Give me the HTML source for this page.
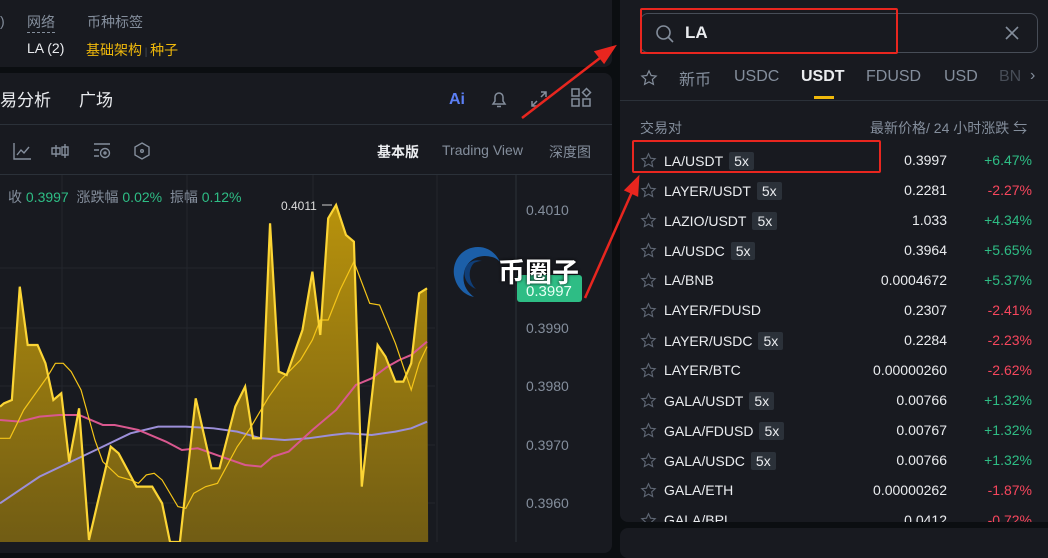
<!DOCTYPE html>
<html><head><meta charset="utf-8"><style>
*{margin:0;padding:0;box-sizing:border-box}
body{width:1048px;height:542px;background:#0b0e11;overflow:hidden;position:relative;font-family:"Liberation Sans","Noto Sans CJK SC",sans-serif;color:#eaecef}
.p{position:absolute;background:#181a20;border-radius:8px}
.t{position:absolute;white-space:nowrap}
.g{color:#848e9c}
.row{position:absolute;left:0;width:428px;height:30px;font-size:14px}
.row .s{position:absolute;left:20px;top:6px}
.row .n{position:absolute;left:44px;top:6px;color:#eaecef}
.row .b{display:inline-block;background:#2b3139;color:#eaecef;padding:1px 5px;margin-left:6px;border-radius:2px}
.row .pr{position:absolute;right:101px;top:6px}
.row .c{position:absolute;right:16px;top:6px}
.up{color:#2ebd85}.dn{color:#f6465d}
</style></head><body>
<div class="p" style="left:-10px;top:0;width:622px;height:67px;border-radius:0 0 8px 8px"></div>
<div class="t g" style="left:0;top:13px;font-size:14px">)</div>
<div class="t g" style="left:27px;top:12px;font-size:14px;border-bottom:1px dashed #848e9c;line-height:20px">网络</div>
<div class="t g" style="left:87px;top:12px;font-size:14px">币种标签</div>
<div class="t" style="left:27px;top:40px;font-size:14px">LA (2)</div>
<div class="t" style="left:86px;top:40px;font-size:14px;color:#f0b90b">基础架构<span style="color:#474d57;font-size:10px"> | </span>种子</div>

<div class="p" style="left:-10px;top:73px;width:622px;height:480px"></div>
<div class="t" style="left:0;top:86px;font-size:17px;color:#eaecef">易分析</div>
<div class="t" style="left:79px;top:86px;font-size:17px;color:#eaecef">广场</div>
<div class="t" style="left:449px;top:91px;font-size:16px;font-weight:bold;color:#5b7ff5">Ai</div>
<svg class="t" style="left:488px;top:88px" width="22" height="22" viewBox="0 0 22 22" fill="none" stroke="#848e9c" stroke-width="1.5"><path d="M5 16h12l-2-3V9a4 4 0 0 0-8 0v4z M9 18.5h4"/></svg>
<svg class="t" style="left:528px;top:88px" width="22" height="22" viewBox="0 0 22 22" fill="none" stroke="#848e9c" stroke-width="1.5"><path d="M13 4h5v5M18 4l-5 5M9 18H4v-5M4 18l5-5"/></svg>
<svg class="t" style="left:570px;top:87px" width="22" height="22" viewBox="0 0 22 22" fill="none" stroke="#848e9c" stroke-width="1.5"><rect x="2" y="12" width="7" height="7"/><rect x="13" y="12" width="7" height="7"/><rect x="2" y="2" width="7" height="7"/><path d="M16.5 1.5l4 4-4 4-4-4z"/></svg>
<div style="position:absolute;left:0;top:124px;width:612px;height:1px;background:#2b3139"></div>
<svg class="t" style="left:12px;top:140px" width="150" height="22" viewBox="0 0 150 22" fill="none" stroke="#848e9c" stroke-width="1.4"><path d="M2 3v16h17M5 15l4-5 3 3 5-6"/><path d="M44 5v12M40 8h8v6h-8zM53 4v14M50 7h6v8h-6z"/><path d="M82 4h16M82 10h5M82 16h5"/><circle cx="93" cy="13" r="4.5"/><circle cx="93" cy="13" r="1"/><path d="M130 3l7 4v8l-7 4-7-4V7z"/><circle cx="130" cy="11" r="1.3"/></svg>
<div class="t" style="left:377px;top:142px;font-size:14px;font-weight:bold">基本版</div>
<div class="t g" style="left:442px;top:142px;font-size:14px">Trading View</div>
<div class="t g" style="left:549px;top:142px;font-size:14px">深度图</div>
<div style="position:absolute;left:0;top:174px;width:612px;height:1px;background:#2b3139"></div>

<svg class="t" style="left:0;top:175px" width="612" height="367" viewBox="0 175 612 367">
<defs><linearGradient id="f" x1="0" y1="0" x2="0" y2="1"><stop offset="0" stop-color="#b8920c"/><stop offset="1" stop-color="#6e5a14"/></linearGradient><clipPath id="c"><rect x="0" y="175" width="435" height="367"/></clipPath></defs>
<g stroke="#23262d" stroke-width="1"><path d="M62 175V542M187 175V542M313 175V542M437 175V542M0 268H435M0 328H435M0 386H435M0 445H435M0 503H435"/></g>
<path d="M516 175V542" stroke="#2b3139"/>
<g clip-path="url(#c)"><g transform="translate(0,190) scale(0.3954,0.3333)">
<polygon fill="url(#f)" points="0,650 10,640 30,630 50,290 70,465 95,465 115,520 135,630 155,610 175,815 200,655 225,1050 280,770 300,790 345,890 385,890 410,940 430,1056 455,1056 495,625 535,835 555,835 595,650 620,590 640,745 660,745 683,100 705,545 725,555 765,420 790,245 810,435 830,85 850,45 875,135 895,155 915,890 955,465 975,500 1000,575 1020,575 1040,520 1060,310 1080,295 1083,1100 0,1100"/>
<polyline fill="none" stroke="#9c8fd9" stroke-width="2" vector-effect="non-scaling-stroke" points="0,940 50,900 100,860 180,815 260,770 330,730 400,710 470,710 540,715 600,725 660,745 720,750 780,745 840,735 880,730 940,735 1000,725 1040,715 1080,695"/>
<polyline fill="none" stroke="#d9588f" stroke-width="2" vector-effect="non-scaling-stroke" points="0,690 50,695 100,680 150,675 200,675 260,705 290,705 350,720 420,755 460,780 500,775 560,800 620,825 660,830 690,800 730,785 790,720 850,660 900,585 940,565 980,530 1010,510 1040,495 1080,455"/>
<polyline fill="none" stroke="#f5c518" stroke-width="1.2" vector-effect="non-scaling-stroke" points="0,745 25,745 60,660 120,560 140,520 160,520 180,545 205,600 240,750 260,815 300,860 330,870 350,880 370,855 390,850 410,870 450,950 470,955 490,910 520,890 550,880 600,770 630,720 680,620 710,570 760,510 790,450 810,390 830,390 860,300 895,215 935,340 960,345 1000,460 1040,600 1060,520 1080,470"/>
<polyline fill="none" stroke="#fcd535" stroke-width="2.2" vector-effect="non-scaling-stroke" points="0,650 10,640 30,630 50,290 70,465 95,465 115,520 135,630 155,610 175,815 200,655 225,1050 280,770 300,790 345,890 385,890 410,940 430,1056 455,1056 495,625 535,835 555,835 595,650 620,590 640,745 660,745 683,100 705,545 725,555 765,420 790,245 810,435 830,85 850,45 875,135 895,155 915,890 955,465 975,500 1000,575 1020,575 1040,520 1060,310 1080,295"/>
</g></g>
<path d="M322 205h10" stroke="#ccc"/>
<text x="281" y="210" fill="#ddd" font-size="12" font-family="Liberation Sans">0.4011</text>
<g fill="#848e9c" font-size="14" font-family="Liberation Sans"><text x="526" y="215">0.4010</text><text x="526" y="333">0.3990</text><text x="526" y="391">0.3980</text><text x="526" y="450">0.3970</text><text x="526" y="508">0.3960</text></g>
<rect x="517" y="275" width="65" height="27" rx="3" fill="#2ebd85"/>
<text x="526" y="296" fill="#e8fff4" font-size="15" font-family="Liberation Sans">0.3997</text>
</svg>
<div class="t g" style="left:8px;top:187px;font-size:14px">收 <span class="up">0.3997</span> &nbsp;涨跌幅 <span class="up">0.02%</span> &nbsp;振幅 <span class="up">0.12%</span></div>
<svg class="t" style="left:448px;top:243px" width="60" height="60" viewBox="0 0 60 60"><path d="M30 4C14 4 4 18 6 32c2 12 10 20 20 22-8-6-12-14-10-24 2-12 14-20 28-16 4 1 6 3 8 5C48 10 40 4 30 4z" fill="#1c5fa8"/><path d="M26 20c-6 6-6 18 2 26-10-4-14-14-10-22 3-6 10-8 16-6-3 0-6 1-8 2z" fill="#0f3e78"/></svg>
<div class="t" style="left:498px;top:251px;font-size:27px;font-weight:bold;color:#fff;text-shadow:0 0 3px #000">币圈子</div>

<div class="p" style="left:620px;top:-8px;width:440px;height:530px"></div>
<div class="p" style="left:620px;top:528px;width:440px;height:30px"></div>
<div style="position:absolute;left:640px;top:13px;width:398px;height:40px;border:1px solid #474d57;border-radius:8px"></div>
<svg class="t" style="left:655px;top:24px" width="20" height="20" viewBox="0 0 20 20" fill="none" stroke="#848e9c" stroke-width="1.6"><circle cx="8.5" cy="8.5" r="6.5"/><path d="M13.5 13.5l4.5 4.5"/></svg>
<div class="t" style="left:685px;top:23px;font-size:17px;font-weight:bold">LA</div>
<svg class="t" style="left:1004px;top:25px" width="16" height="16" viewBox="0 0 16 16" stroke="#848e9c" stroke-width="1.6"><path d="M2 2l12 12M14 2L2 14"/></svg>
<div style="position:absolute;left:640px;top:8px;width:258px;height:46px;border:2px solid #e8261f;border-radius:2px"></div>
<svg class="t" style="left:640px;top:69px" width="18" height="18" viewBox="0 0 24 24" fill="none" stroke="#848e9c" stroke-width="1.6"><path d="M12 2.5l2.9 6.2 6.6.7-5 4.5 1.4 6.6L12 17.2l-5.9 3.3 1.4-6.6-5-4.5 6.6-.7z"/></svg>
<div class="t g" style="left:679px;top:66px;font-size:16px">新币</div>
<div class="t g" style="left:734px;top:68px;font-size:16px">USDC</div>
<div class="t" style="left:801px;top:68px;font-size:16px;font-weight:bold">USDT</div>
<div style="position:absolute;left:814px;top:96px;width:20px;height:3px;background:#f0b90b"></div>
<div class="t g" style="left:866px;top:68px;font-size:16px">FDUSD</div>
<div class="t g" style="left:944px;top:68px;font-size:16px">USD</div>
<div class="t" style="left:999px;top:68px;font-size:16px;color:#474d57">BN</div>
<div class="t g" style="left:1030px;top:67px;font-size:16px">›</div>
<div style="position:absolute;left:620px;top:100px;width:428px;height:1px;background:#2b3139"></div>
<div class="t g" style="left:640px;top:118px;font-size:14px">交易对</div>
<div class="t g" style="left:870px;top:118px;font-size:14px">最新价格/ 24 小时涨跌 ⇆</div>

<div style="position:absolute;left:620px;top:146px;width:428px;height:376px;overflow:hidden">
<div class="row" style="top:0"><svg class="s" width="17" height="17" viewBox="0 0 24 24" fill="none" stroke="#5e6673" stroke-width="1.6"><path d="M12 2.5l2.9 6.2 6.6.7-5 4.5 1.4 6.6L12 17.2l-5.9 3.3 1.4-6.6-5-4.5 6.6-.7z"/></svg><span class="n">LA/USDT<span class="b">5x</span></span><span class="pr">0.3997</span><span class="c up">+6.47%</span></div>
<div class="row" style="top:30px"><svg class="s" width="17" height="17" viewBox="0 0 24 24" fill="none" stroke="#5e6673" stroke-width="1.6"><path d="M12 2.5l2.9 6.2 6.6.7-5 4.5 1.4 6.6L12 17.2l-5.9 3.3 1.4-6.6-5-4.5 6.6-.7z"/></svg><span class="n">LAYER/USDT<span class="b">5x</span></span><span class="pr">0.2281</span><span class="c dn">-2.27%</span></div>
<div class="row" style="top:60px"><svg class="s" width="17" height="17" viewBox="0 0 24 24" fill="none" stroke="#5e6673" stroke-width="1.6"><path d="M12 2.5l2.9 6.2 6.6.7-5 4.5 1.4 6.6L12 17.2l-5.9 3.3 1.4-6.6-5-4.5 6.6-.7z"/></svg><span class="n">LAZIO/USDT<span class="b">5x</span></span><span class="pr">1.033</span><span class="c up">+4.34%</span></div>
<div class="row" style="top:90px"><svg class="s" width="17" height="17" viewBox="0 0 24 24" fill="none" stroke="#5e6673" stroke-width="1.6"><path d="M12 2.5l2.9 6.2 6.6.7-5 4.5 1.4 6.6L12 17.2l-5.9 3.3 1.4-6.6-5-4.5 6.6-.7z"/></svg><span class="n">LA/USDC<span class="b">5x</span></span><span class="pr">0.3964</span><span class="c up">+5.65%</span></div>
<div class="row" style="top:120px"><svg class="s" width="17" height="17" viewBox="0 0 24 24" fill="none" stroke="#5e6673" stroke-width="1.6"><path d="M12 2.5l2.9 6.2 6.6.7-5 4.5 1.4 6.6L12 17.2l-5.9 3.3 1.4-6.6-5-4.5 6.6-.7z"/></svg><span class="n">LA/BNB</span><span class="pr">0.0004672</span><span class="c up">+5.37%</span></div>
<div class="row" style="top:150px"><svg class="s" width="17" height="17" viewBox="0 0 24 24" fill="none" stroke="#5e6673" stroke-width="1.6"><path d="M12 2.5l2.9 6.2 6.6.7-5 4.5 1.4 6.6L12 17.2l-5.9 3.3 1.4-6.6-5-4.5 6.6-.7z"/></svg><span class="n">LAYER/FDUSD</span><span class="pr">0.2307</span><span class="c dn">-2.41%</span></div>
<div class="row" style="top:180px"><svg class="s" width="17" height="17" viewBox="0 0 24 24" fill="none" stroke="#5e6673" stroke-width="1.6"><path d="M12 2.5l2.9 6.2 6.6.7-5 4.5 1.4 6.6L12 17.2l-5.9 3.3 1.4-6.6-5-4.5 6.6-.7z"/></svg><span class="n">LAYER/USDC<span class="b">5x</span></span><span class="pr">0.2284</span><span class="c dn">-2.23%</span></div>
<div class="row" style="top:210px"><svg class="s" width="17" height="17" viewBox="0 0 24 24" fill="none" stroke="#5e6673" stroke-width="1.6"><path d="M12 2.5l2.9 6.2 6.6.7-5 4.5 1.4 6.6L12 17.2l-5.9 3.3 1.4-6.6-5-4.5 6.6-.7z"/></svg><span class="n">LAYER/BTC</span><span class="pr">0.00000260</span><span class="c dn">-2.62%</span></div>
<div class="row" style="top:240px"><svg class="s" width="17" height="17" viewBox="0 0 24 24" fill="none" stroke="#5e6673" stroke-width="1.6"><path d="M12 2.5l2.9 6.2 6.6.7-5 4.5 1.4 6.6L12 17.2l-5.9 3.3 1.4-6.6-5-4.5 6.6-.7z"/></svg><span class="n">GALA/USDT<span class="b">5x</span></span><span class="pr">0.00766</span><span class="c up">+1.32%</span></div>
<div class="row" style="top:270px"><svg class="s" width="17" height="17" viewBox="0 0 24 24" fill="none" stroke="#5e6673" stroke-width="1.6"><path d="M12 2.5l2.9 6.2 6.6.7-5 4.5 1.4 6.6L12 17.2l-5.9 3.3 1.4-6.6-5-4.5 6.6-.7z"/></svg><span class="n">GALA/FDUSD<span class="b">5x</span></span><span class="pr">0.00767</span><span class="c up">+1.32%</span></div>
<div class="row" style="top:300px"><svg class="s" width="17" height="17" viewBox="0 0 24 24" fill="none" stroke="#5e6673" stroke-width="1.6"><path d="M12 2.5l2.9 6.2 6.6.7-5 4.5 1.4 6.6L12 17.2l-5.9 3.3 1.4-6.6-5-4.5 6.6-.7z"/></svg><span class="n">GALA/USDC<span class="b">5x</span></span><span class="pr">0.00766</span><span class="c up">+1.32%</span></div>
<div class="row" style="top:330px"><svg class="s" width="17" height="17" viewBox="0 0 24 24" fill="none" stroke="#5e6673" stroke-width="1.6"><path d="M12 2.5l2.9 6.2 6.6.7-5 4.5 1.4 6.6L12 17.2l-5.9 3.3 1.4-6.6-5-4.5 6.6-.7z"/></svg><span class="n">GALA/ETH</span><span class="pr">0.00000262</span><span class="c dn">-1.87%</span></div>
<div class="row" style="top:360px"><svg class="s" width="17" height="17" viewBox="0 0 24 24" fill="none" stroke="#5e6673" stroke-width="1.6"><path d="M12 2.5l2.9 6.2 6.6.7-5 4.5 1.4 6.6L12 17.2l-5.9 3.3 1.4-6.6-5-4.5 6.6-.7z"/></svg><span class="n">GALA/BPI</span><span class="pr">0.0412</span><span class="c dn">-0.72%</span></div>
</div>
<div style="position:absolute;left:632px;top:140px;width:249px;height:33px;border:2px solid #e8261f;border-radius:2px"></div>

<svg class="t" style="left:0;top:0" width="1048" height="542" viewBox="0 0 1048 542">
<g stroke="#e8261f" stroke-width="2.5" fill="#e8261f">
<path d="M522 118L600 58"/><path d="M614 47l-18 5 8 10z"/>
<path d="M585 298L632 192"/><path d="M638 178l-12 12 11 5z"/>
</g></svg>
</body></html>
